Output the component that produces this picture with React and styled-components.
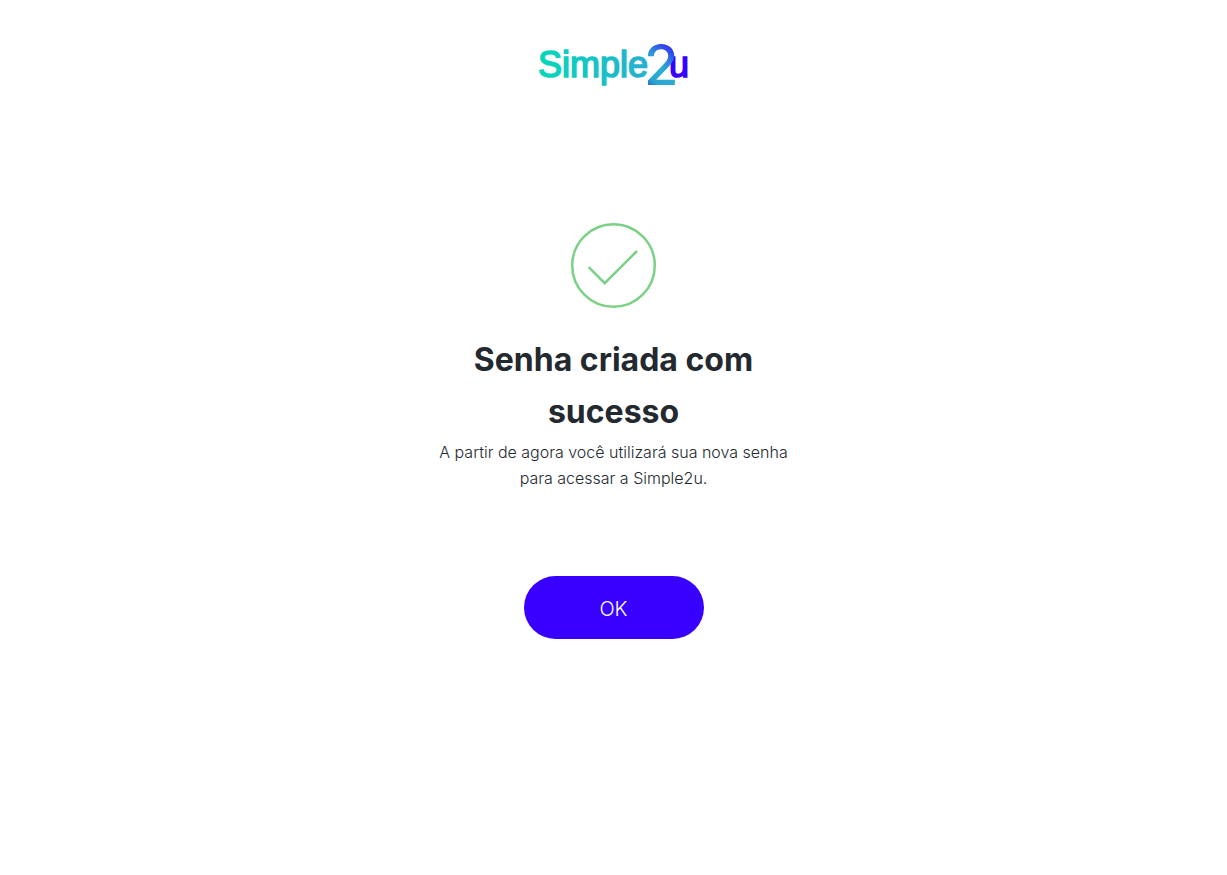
import React from "react";
import styled, { createGlobalStyle } from "styled-components";

const GlobalStyle = createGlobalStyle`
  *, *::before, *::after { box-sizing: border-box; }
  body {
    margin: 0;
    background: #fff;
    color: #23292f;
    font-family: Inter, "Liberation Sans", sans-serif;
  }
`;

const Page = styled.div`
  display: flex;
  flex-direction: column;
  align-items: center;
  padding: 40px 16px;
`;

const Header = styled.header`
  display: flex;
  justify-content: center;
`;

const Logo = styled.svg`
  display: block;
  width: 150px;
  height: 50px;
  overflow: visible;
`;

const Content = styled.main`
  display: flex;
  flex-direction: column;
  align-items: center;
  width: 100%;
  max-width: 360px;
  margin-top: 132px;
  text-align: center;
`;

const SuccessIcon = styled.svg`
  display: block;
  width: 87px;
  height: 87px;
`;

const Title = styled.h1`
  margin: 25px 0 0;
  font-size: 32px;
  line-height: 52px;
  font-weight: 700;
`;

const Message = styled.p`
  margin: 1px 0 0;
  font-size: 16px;
  line-height: 26px;
  font-weight: 300;
`;

const Button = styled.button`
  width: 180px;
  height: 63px;
  margin-top: 85px;
  padding: 2px 0 0;
  border: 0;
  border-radius: 32px;
  background: #3700ff;
  color: #fff;
  font-family: inherit;
  font-size: 20px;
  line-height: 30px;
  font-weight: 300;
  cursor: pointer;
`;

function BrandLogo() {
  return (
    <Logo viewBox="0 0 150 50" role="img" aria-label="Simple2u">
      <defs>
        <linearGradient id="word" gradientUnits="userSpaceOnUse" x1="0" y1="0" x2="110" y2="0">
          <stop offset="0" stopColor="#05d8b9" />
          <stop offset="1" stopColor="#27afd0" />
        </linearGradient>
        <linearGradient id="two" gradientUnits="userSpaceOnUse" x1="108" y1="46" x2="134" y2="12">
          <stop offset="0" stopColor="#2860c8" />
          <stop offset="0.18" stopColor="#2aa5d0" />
          <stop offset="0.5" stopColor="#2aaed2" />
          <stop offset="0.7" stopColor="#2c91d8" />
          <stop offset="1" stopColor="#3340f0" />
        </linearGradient>
      </defs>
      <g fontFamily="Liberation Sans, sans-serif" fontSize="36">
        <text x="-1" y="37" fill="url(#word)" stroke="url(#word)" strokeWidth="1.6">Simple</text>
        <text x="130" y="37" fill="#3700ff" stroke="#3700ff" strokeWidth="1.6">u</text>
      </g>
      <text x="105" y="45" fill="url(#two)" fontFamily="Inter, sans-serif" fontSize="56" fontWeight="500">2</text>
    </Logo>
  );
}

export default function App() {
  return (
    <>
      <GlobalStyle />
      <Page>
        <Header>
          <BrandLogo />
        </Header>
        <Content>
          <SuccessIcon viewBox="0 0 87 87" fill="none" stroke="#7bd185" strokeWidth="2.5" aria-hidden="true">
            <circle cx="43.5" cy="43.5" r="41.3" />
            <path d="M18.7 45.2 34.7 61.2 67 29" />
          </SuccessIcon>
          <Title>Senha criada com sucesso</Title>
          <Message>A partir de agora você utilizará sua nova senha para acessar a Simple2u.</Message>
          <Button type="button">OK</Button>
        </Content>
      </Page>
    </>
  );
}
